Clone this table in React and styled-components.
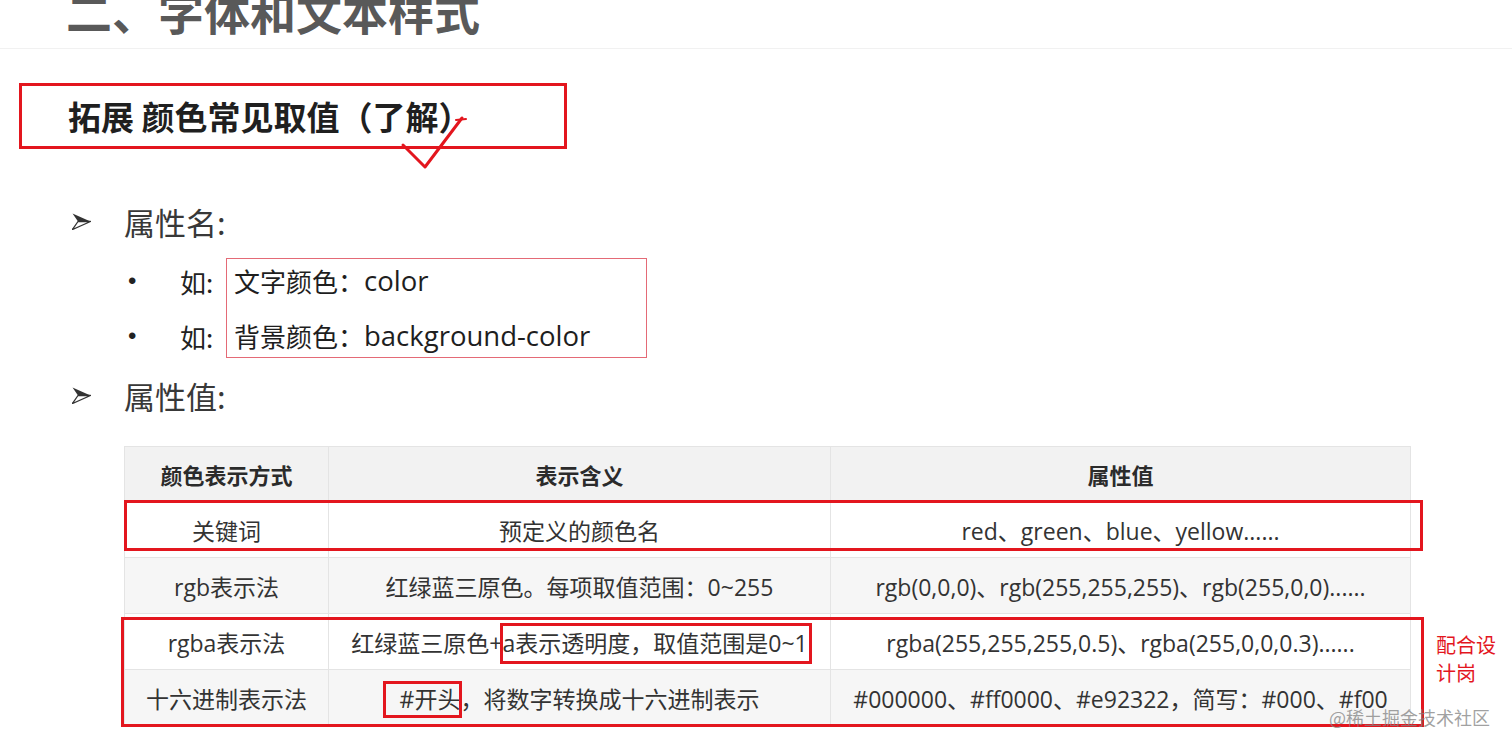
import React from "react";
import styled, { createGlobalStyle } from "styled-components";

const GlobalStyle = createGlobalStyle`
  html, body {
    margin: 0;
    padding: 0;
    background: #fff;
  }
  body {
    font-family: "Open Sans", "Noto Sans CJK SC", sans-serif;
    color: #333;
  }
`;

const Slide = styled.div`
  position: relative;
  width: 1512px;
  height: 748px;
  overflow: hidden;
  background: #fff;
`;

const TopBar = styled.div`
  height: 49px;
  box-sizing: border-box;
  border-bottom: 1px solid #f1f1f1;
  overflow: hidden;
  display: flex;
  align-items: flex-end;
  padding: 0 0 15px 66px;
`;

const ChapterTitle = styled.h1`
  margin: 0;
  font-family: "Noto Sans CJK SC", sans-serif;
  font-size: 46px;
  line-height: 46px;
  font-weight: 700;
  color: #595959;
  white-space: nowrap;
`;

const TopicBox = styled.div`
  position: relative;
  box-sizing: border-box;
  width: 548px;
  height: 66px;
  margin: 34px 0 0 19px;
  border: 3px solid #e3161e;
  display: flex;
  align-items: center;
  padding-left: 46px;
`;

const TopicText = styled.h2`
  margin: 0;
  font-family: "Noto Sans CJK SC", sans-serif;
  font-size: 33px;
  line-height: 1;
  font-weight: 700;
  color: #1f1f1f;
  white-space: nowrap;
`;

const CheckMark = styled.svg`
  position: absolute;
  left: 373px;
  top: 22px;
`;

const Section = styled.div`
  padding-left: 72px;
  margin-top: 50px;
`;

const Point = styled.div`
  display: flex;
  align-items: center;
  height: 44px;
  margin-top: ${(p) => p.$gap || 0}px;
  font-family: "Noto Sans CJK SC", sans-serif;
  font-size: 31px;
  color: #383838;
`;

const ArrowIcon = styled.svg`
  margin-right: 33px;
  flex-shrink: 0;
`;

const SubGroup = styled.div`
  display: flex;
  margin: 15px 0 0 56px;
`;

const Labels = styled.div`
  display: flex;
  flex-direction: column;
  gap: 11px;
  width: 98px;
  padding-top: 1px;
`;

const LabelRow = styled.div`
  display: flex;
  align-items: center;
  height: 44px;
  font-family: "Noto Sans CJK SC", sans-serif;
  font-size: 26px;
  color: #222;
`;

const Bullet = styled.span`
  width: 52px;
  font-family: "Liberation Sans", sans-serif;
  font-size: 24px;
  line-height: 1;
`;

const NameBox = styled.div`
  box-sizing: border-box;
  width: 421px;
  height: 100px;
  border: 1px solid #e46a76;
  padding-left: 7px;
  display: flex;
  flex-direction: column;
  gap: 11px;
`;

const NameLine = styled.div`
  height: 44px;
  display: flex;
  align-items: center;
  font-family: "Noto Sans CJK SC", sans-serif;
  font-size: 26px;
  color: #1e1e1e;
  white-space: nowrap;
`;

const Prop = styled.span`
  font-family: "Open Sans", sans-serif;
  font-size: 27.5px;
`;

const TableArea = styled.div`
  position: relative;
  width: 1286px;
  margin: 29px 0 0 124px;
`;

const Table = styled.table`
  width: 1286px;
  border-collapse: collapse;
  table-layout: fixed;
  font-family: "Open Sans", "Noto Sans CJK SC", sans-serif;
  font-size: 23px;
  color: #333;
`;

const Row = styled.tr`
  height: ${(p) => (p.$head ? 55 : 56)}px;
  background: ${(p) => (p.$head ? "#f2f2f2" : p.$shade ? "#f6f6f6" : "#fff")};
`;

const Head = styled.th`
  border: 1px solid #e4e4e4;
  padding: 0;
  font-family: "Noto Sans CJK SC", sans-serif;
  font-size: 22px;
  font-weight: 700;
  color: #2b2b2b;
  text-align: center;
  vertical-align: middle;
`;

const Cell = styled.td`
  border: 1px solid #e4e4e4;
  padding: 0;
  text-align: center;
  vertical-align: middle;
  white-space: nowrap;
`;

const Marked = styled.span`
  position: relative;
  &::after {
    content: "";
    position: absolute;
    left: ${(p) => p.$l}px;
    right: ${(p) => p.$r}px;
    top: ${(p) => p.$t}px;
    bottom: ${(p) => p.$b}px;
    border: 3px solid #e3161e;
  }
`;

const RowFrame = styled.div`
  position: absolute;
  box-sizing: border-box;
  left: ${(p) => p.$left}px;
  top: ${(p) => p.$top}px;
  width: ${(p) => p.$width}px;
  height: ${(p) => p.$height}px;
  border: 3px solid #e3161e;
  pointer-events: none;
`;

const SideNote = styled.div`
  position: absolute;
  left: 1312px;
  top: 185px;
  font-family: "Noto Sans CJK SC", sans-serif;
  font-size: 20px;
  line-height: 28px;
  color: #e3161e;
  white-space: nowrap;
`;

const Watermark = styled.div`
  position: absolute;
  right: 22px;
  bottom: 20px;
  font-family: "Noto Sans CJK SC", sans-serif;
  font-size: 18px;
  line-height: 22px;
  color: rgba(130, 130, 130, 0.75);
  white-space: nowrap;
`;

const Arrow = () => (
  <ArrowIcon width="19" height="17" viewBox="0 0 19 17">
    <polygon points="0.5,0.5 18.5,8.5 6,8.5" fill="#333" />
    <polygon points="6,8.5 18.5,8.5 0.5,16.5" fill="#fff" stroke="#333" strokeWidth="1.3" strokeLinejoin="round" />
  </ArrowIcon>
);

const rows = [
  { kind: "关键词", meaning: "预定义的颜色名", value: "red、green、blue、yellow......" },
  { kind: "rgb表示法", meaning: "红绿蓝三原色。每项取值范围：0~255", value: "rgb(0,0,0)、rgb(255,255,255)、rgb(255,0,0)......" },
];

const App = () => {
  return (
    <Slide>
      <GlobalStyle />
      <TopBar>
        <ChapterTitle>二、字体和文本样式</ChapterTitle>
      </TopBar>

      <TopicBox>
        <TopicText>拓展 颜色常见取值（了解）</TopicText>
        <CheckMark width="75" height="65" viewBox="0 0 75 65">
          <path d="M8 37 L30 59 L67 10" fill="none" stroke="#e3161e" strokeWidth="3" strokeLinecap="round" strokeLinejoin="round" />
          <path d="M61 12 L71 11" fill="none" stroke="#e3161e" strokeWidth="2" strokeLinecap="round" />
        </CheckMark>
      </TopicBox>

      <Section>
        <Point>
          <Arrow />
          属性名:
        </Point>
        <SubGroup>
          <Labels>
            <LabelRow>
              <Bullet>•</Bullet>如:
            </LabelRow>
            <LabelRow>
              <Bullet>•</Bullet>如:
            </LabelRow>
          </Labels>
          <NameBox>
            <NameLine>
              文字颜色：<Prop>color</Prop>
            </NameLine>
            <NameLine>
              背景颜色：<Prop>background-color</Prop>
            </NameLine>
          </NameBox>
        </SubGroup>
        <Point $gap={15}>
          <Arrow />
          属性值:
        </Point>
      </Section>

      <TableArea>
        <Table>
          <colgroup>
            <col style={{ width: 204 }} />
            <col style={{ width: 502 }} />
            <col style={{ width: 580 }} />
          </colgroup>
          <thead>
            <Row $head>
              <Head>颜色表示方式</Head>
              <Head>表示含义</Head>
              <Head>属性值</Head>
            </Row>
          </thead>
          <tbody>
            {rows.map((r, i) => (
              <Row key={r.kind} $shade={i % 2 === 1}>
                <Cell>{r.kind}</Cell>
                <Cell>{r.meaning}</Cell>
                <Cell>{r.value}</Cell>
              </Row>
            ))}
            <Row>
              <Cell>rgba表示法</Cell>
              <Cell>
                红绿蓝三原色+
                <Marked $l={-2} $r={-4} $t={-4} $b={-5}>
                  a表示透明度，取值范围是0~1
                </Marked>
              </Cell>
              <Cell>rgba(255,255,255,0.5)、rgba(255,0,0,0.3)......</Cell>
            </Row>
            <Row $shade>
              <Cell>十六进制表示法</Cell>
              <Cell>
                <Marked $l={-17} $r={-2} $t={-2} $b={-3}>#开头</Marked>，将数字转换成十六进制表示
              </Cell>
              <Cell>#000000、#ff0000、#e92322，简写：#000、#f00</Cell>
            </Row>
          </tbody>
        </Table>
        <RowFrame $left={0} $top={54} $width={1299} $height={51} />
        <RowFrame $left={-3} $top={171} $width={1303} $height={110} />
        <SideNote>
          配合设
          <br />
          计岗
        </SideNote>
      </TableArea>

      <Watermark>@稀土掘金技术社区</Watermark>
    </Slide>
  );
};

export default App;
